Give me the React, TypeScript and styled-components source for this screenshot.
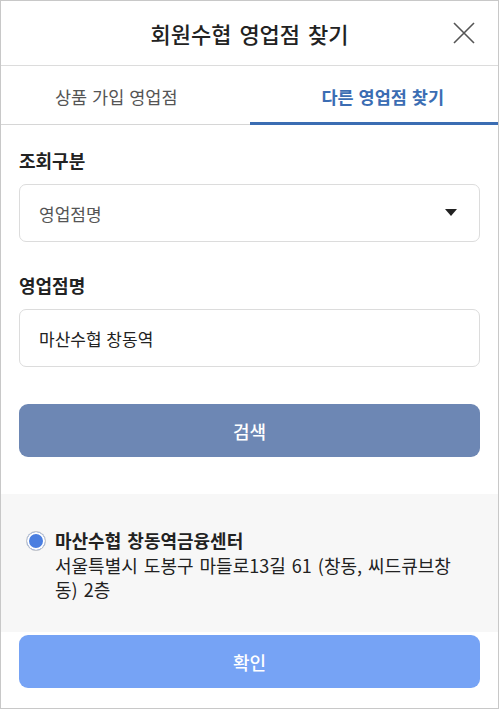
import React, { useState } from "react";
import styled, { createGlobalStyle } from "styled-components";

const Global = createGlobalStyle`
  html, body { margin: 0; padding: 0; background: #fff; }
  body { font-family: "Noto Sans CJK KR", "Noto Sans", sans-serif; }
  * { box-sizing: border-box; }
`;

const Frame = styled.div`
  width: 499px;
  height: 709px;
  border: 1px solid #c8c8c8;
  display: flex;
  flex-direction: column;
  background: #fff;
  overflow: hidden;
`;

const Header = styled.header`
  height: 65px;
  display: grid;
  grid-template-columns: 1fr auto 1fr;
  align-items: center;
  border-bottom: 1px solid #dcdcdc;
`;

const Title = styled.h1`
  grid-column: 2;
  margin: 0;
  font-size: 22px;
  font-weight: 500;
  color: #222;
  word-spacing: 3px;
`;

const CloseButton = styled.button`
  grid-column: 3;
  justify-self: end;
  margin-right: 22px;
  width: 24px;
  height: 24px;
  padding: 0;
  border: 0;
  background: none;
  display: flex;
  align-items: center;
  justify-content: center;
`;

const Tabs = styled.nav`
  display: grid;
  grid-template-columns: 1fr 1fr;
  height: 59px;
  border-bottom: 1px solid #d6d6d6;
`;

const Tab = styled.button<{ $active?: boolean; $side: "left" | "right" }>`
  border: 0;
  background: none;
  font-family: inherit;
  font-size: 17.5px;
  word-spacing: 1px;
  font-weight: ${(p) => (p.$active ? 700 : 400)};
  color: ${(p) => (p.$active ? "#3b6db3" : "#555")};
  border-bottom: 3px solid ${(p) => (p.$active ? "#3b6db3" : "transparent")};
  margin-bottom: -1px;
  padding: 4px 0 0;
  ${(p) => (p.$side === "left" ? "padding-right: 18px;" : "padding-left: 18px;")}
`;

const Form = styled.section`
  padding: 23px 18px 0;
  display: flex;
  flex-direction: column;
`;

const Label = styled.label<{ $top?: number }>`
  font-size: 18px;
  font-weight: 700;
  color: #222;
  line-height: 24px;
  margin-top: ${(p) => p.$top ?? 0}px;
  margin-bottom: 12px;
`;

const Field = styled.div`
  height: 58px;
  border: 1px solid #dcdcdc;
  border-radius: 7px;
  display: flex;
  align-items: center;
  justify-content: space-between;
  padding: 0 22px 0 19px;
  font-size: 17px;
`;

const FieldText = styled.span<{ $muted?: boolean }>`
  color: ${(p) => (p.$muted ? "#555" : "#222")};
  word-spacing: 1px;
`;

const PrimaryButton = styled.button<{ $bg: string; $top: number }>`
  height: 53px;
  width: 100%;
  margin-top: ${(p) => p.$top}px;
  border: 0;
  border-radius: 9px;
  background: ${(p) => p.$bg};
  color: #fff;
  font-family: inherit;
  font-size: 18px;
  font-weight: 500;
`;

const Results = styled.section`
  margin-top: 37px;
  background: #f7f7f7;
  padding: 34px 36px 0 25px;
  height: 138px;
`;

const ResultItem = styled.div`
  display: flex;
  align-items: flex-start;
  gap: 9px;
`;

const Radio = styled.span`
  flex: none;
  margin-top: 3px;
  width: 20px;
  height: 20px;
  border-radius: 50%;
  border: 1px solid #c9c9c9;
  background: #4a7ee0;
  box-shadow: inset 0 0 0 2px #fff;
`;

const ResultText = styled.div`
  display: flex;
  flex-direction: column;
  font-size: 18px;
  line-height: 24.5px;
  color: #222;
  word-spacing: 2px;
`;

const ResultName = styled.strong`
  font-weight: 700;
`;

const Footer = styled.div`
  padding: 3px 18px 0;
`;

export default function App() {
  const [tab, setTab] = useState(1);
  return (
    <>
      <Global />
      <Frame>
        <Header>
          <Title>회원수협 영업점 찾기</Title>
          <CloseButton aria-label="닫기">
            <svg width="22" height="22" viewBox="0 0 22 22">
              <path d="M1 1 L21 21 M21 1 L1 21" stroke="#555" strokeWidth="1.6" fill="none" />
            </svg>
          </CloseButton>
        </Header>
        <Tabs>
          <Tab $side="left" $active={tab === 0} onClick={() => setTab(0)}>상품 가입 영업점</Tab>
          <Tab $side="right" $active={tab === 1} onClick={() => setTab(1)}>다른 영업점 찾기</Tab>
        </Tabs>
        <Form>
          <Label>조회구분</Label>
          <Field>
            <FieldText $muted>영업점명</FieldText>
            <svg width="12" height="8" viewBox="0 0 12 8">
              <path d="M0 0 H12 L6 7 Z" fill="#222" />
            </svg>
          </Field>
          <Label $top={31}>영업점명</Label>
          <Field>
            <FieldText>마산수협 창동역</FieldText>
          </Field>
          <PrimaryButton $bg="#6d87b4" $top={37}>검색</PrimaryButton>
        </Form>
        <Results>
          <ResultItem>
            <Radio />
            <ResultText>
              <ResultName>마산수협 창동역금융센터</ResultName>
              <span>서울특별시 도봉구 마들로13길 61 (창동, 씨드큐브창동) 2층</span>
            </ResultText>
          </ResultItem>
        </Results>
        <Footer>
          <PrimaryButton $bg="#76a3f5" $top={0}>확인</PrimaryButton>
        </Footer>
      </Frame>
    </>
  );
}
